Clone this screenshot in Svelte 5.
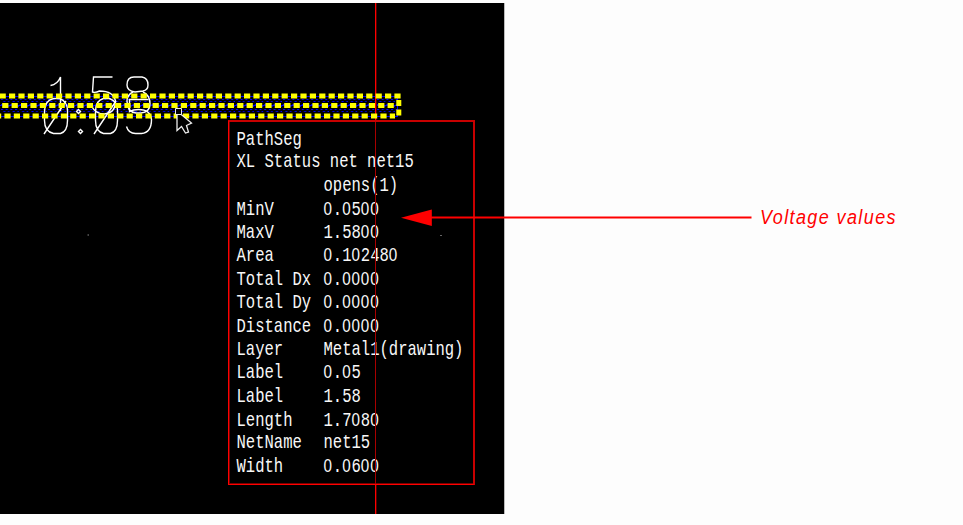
<script>
  const rows = [
    ['MinV', '0.0500'],
    ['MaxV', '1.5800'],
    ['Area', '0.102480'],
    ['Total Dx', '0.0000'],
    ['Total Dy', '0.0000'],
    ['Distance', '0.0000'],
    ['Layer', 'Metal1(drawing)'],
    ['Label', '0.05'],
    ['Label', '1.58'],
    ['Length', '1.7080'],
    ['NetName', 'net15'],
    ['Width', '0.0600']
  ];
  // runs of zeros are set in a face with an open zero
  const split = (s) => s.split(/(0+)/).filter(Boolean);
</script>

<main>
  <section class="canvas">
    <svg class="art" width="504" height="511" viewBox="0 3 504 511">
      <defs>
        <pattern id="dots" width="9.4" height="5" patternUnits="userSpaceOnUse" y="98">
          <path d="M1 1.5h2M5.700 1.500h2M3.300 3.500h2M8 3.500h1.400" stroke="#0000ff" />
        </pattern>
      </defs>
      <rect x="0" y="98" width="398" height="16" fill="url(#dots)" />
      <path d="M0 96.500H398M0 105.500H398M0 116.500H398M397.500 96V116" stroke="#00f" fill="none" />
      <path d="M375 3h1V514h-1z" fill="#f00" />
      <path d="M376 3h1V514h-1z" fill="#500" />
      <g fill="none" stroke="#fff" stroke-width="1.4">
        <path d="M50.500 85.500q7-1 10-8.500v34" />
        <path d="M112.500 77H93.500l-1 15q3 1 7-1 14 0 16 10 0 12-11 13-9 0-13-8" />
        <path d="M134 77h8q6 1 6 8 0 5-5 6l-8 1q-8-1-8-7 0-8 7-8zM133 92q-6 3-6 9 0 11 9 12h5q9-1 9-9 0-9-7-12" />
        <path d="M53.500 98.500h6q8 3 8 12v10q0 11-7 13h-7q-9-2-9-13v-9q0-11 9-13zM44 134l22-33" />
        <path d="M103.500 98.500h6q8 3 8 12v10q0 11-7 13h-7q-8-2-8-13v-9q0-11 8-13zM94 134l22-33" />
        <path d="M148.500 99.500h-19v12q4-2 9-2 12 0 13 10 0 13-10 14h-6q-7 0-9-7" />
        <path d="M78.500 109.500l2 2-2 2-2-2zM80.500 129.500l2 2-2 2-2-2z" />
      </g>
      <g fill="none" stroke="#ff0" stroke-width="5" stroke-dasharray="6.200 3.200">
        <path d="M-.4 96H401" />
        <path d="M-7.200 105.500H397" />
        <path d="M-5 116H395" />
        <path d="M398.800 100V106M398.800 109.500v6" stroke-dasharray="none" />
      </g>
      <path d="M177 111v19.500l4.500-4 4 6.500 3-1-2-6.500 5-2.500z" fill="#000" stroke="#eee" stroke-width="1.3" />
      <path d="M175.500 108.500h6v6h-6z" fill="#000" stroke="#eee" />
      <path d="M87.500 235h1.500" stroke="#888" />
    </svg>
    <div class="panel">
      <div class="lines">
        <div class="line">PathSeg</div>
        <div class="line">XL Status net net15</div>
        <div class="line row"><span></span><span>opens(1)</span></div>
        {#each rows as [name, value]}
          <div class="line row"><span>{name}</span><span>{#each split(value) as part}{#if part[0] === '0'}<i>{part}</i>{:else}{part}{/if}{/each}</span></div>
        {/each}
      </div>
      <div class="cross"></div>
      <div class="speck"></div>
    </div>
  </section>
  <div class="callout">
    <svg width="352" height="20" viewBox="0 0 352 20">
      <path d="M28 10.500H350.500" stroke="#f00" stroke-width="2" />
      <path d="M0 10.700L30.800 2.500V19z" fill="#f00" />
    </svg>
    <span>Voltage values</span>
  </div>
</main>

<style>
  main { position: relative; width: 963px; height: 525px; padding-top: 3px; box-sizing: border-box; background: #fdfdfd; overflow: hidden; }
  .canvas { position: relative; width: 504px; height: 511px; background: #000; border-right: 1px solid #bbb; }
  .art { display: block; }
  .panel { position: absolute; left: 228px; top: 117px; width: 247px; height: 365px; box-sizing: border-box; border: 1px solid #f00; border-right: 2px solid #c80000; border-top: 2px solid #c80000; background: #000; box-shadow: inset 1px 0 #700, inset 0 -1px #700; }
  .lines { padding: 4.500px 0 0 7.500px; transform: scaleY(1.25); transform-origin: 0 0; color: #f8f8f8; font: 15.550px/18.750px "Liberation Mono", monospace; }
  .line { height: 18.750px; white-space: pre; }
  .row { display: grid; grid-template-columns: 87px auto; }
  i { font-family: "Liberation Sans", sans-serif; font-style: normal; font-size: 15.200px; line-height: 0; letter-spacing: .880px; }
  .cross { position: absolute; left: 146px; top: 0; bottom: 0; width: 1px; background: #a80000; }
  .speck { position: absolute; left: 211px; top: 113px; width: 2px; height: 1px; background: #666; }
  .callout { position: absolute; left: 400.500px; top: 207px; display: flex; align-items: center; gap: 7.500px; }
  .callout svg { display: block; }
  .callout span { font: italic 20px/20px "Liberation Sans", sans-serif; letter-spacing: 1.550px; transform: scaleX(.9); transform-origin: 0 0; color: #f00; white-space: nowrap; }
</style>
